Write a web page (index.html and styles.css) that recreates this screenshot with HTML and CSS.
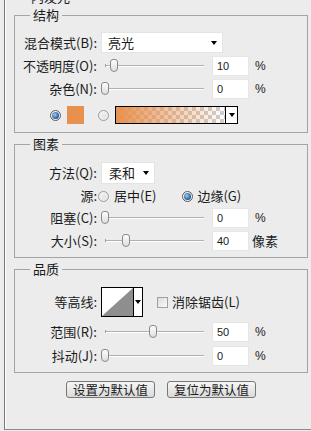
FILE: index.html
```html
<!DOCTYPE html>
<html lang="zh-CN">
<head>
    <meta charset="UTF-8">
    <title>内发光</title>
    <link rel="stylesheet" href="styles.css">
</head>
<body>
    <fieldset class="outer">
        <legend>内发光</legend>

        <fieldset class="group group-structure">
            <legend>结构</legend>
            <div class="row h21">
                <span class="lbl">混合模式(B):</span>
                <div class="select select-blend"><span>亮光</span><i class="caret"></i></div>
            </div>
            <div class="row h20 mt3">
                <span class="lbl">不透明度(O):</span>
                <div class="slider"><span class="thumb" style="left:13px"></span></div>
                <span class="num">10</span><span class="unit">%</span>
            </div>
            <div class="row h20 mt3">
                <span class="lbl">杂色(N):</span>
                <div class="slider"><span class="thumb" style="left:4px"></span></div>
                <span class="num">0</span><span class="unit">%</span>
            </div>
            <div class="row h18 mt7 fill-row">
                <span class="radio on"></span>
                <span class="swatch"></span>
                <span class="radio radio-grad"></span>
                <div class="grad">
                    <span class="grad-fill"></span>
                    <span class="grad-drop"><i class="caret"></i></span>
                </div>
            </div>
        </fieldset>

        <fieldset class="group group-elements">
            <legend>图素</legend>
            <div class="row h22">
                <span class="lbl">方法(Q):</span>
                <div class="select select-method"><span>柔和</span><i class="caret"></i></div>
            </div>
            <div class="row h20 mt2">
                <span class="lbl">源:</span>
                <span class="radio radio-src"></span>
                <span class="opt">居中(E)</span>
                <span class="radio on radio-edge"></span>
                <span class="opt">边缘(G)</span>
            </div>
            <div class="row h20 mt2">
                <span class="lbl">阻塞(C):</span>
                <div class="slider"><span class="thumb" style="left:4px"></span></div>
                <span class="num">0</span><span class="unit">%</span>
            </div>
            <div class="row h20 mt3">
                <span class="lbl">大小(S):</span>
                <div class="slider"><span class="thumb" style="left:25px"></span></div>
                <span class="num">40</span><span class="unit unit-cjk">像素</span>
            </div>
        </fieldset>

        <fieldset class="group group-quality">
            <legend>品质</legend>
            <div class="row h30">
                <span class="lbl">等高线:</span>
                <div class="contour">
                    <span class="contour-graph">
                        <svg width="31" height="28" viewBox="0 0 31 28">
                            <polygon points="0,28 31,0 31,28" fill="#8e8e8e"/>
                        </svg>
                    </span>
                    <span class="contour-drop"><i class="caret"></i></span>
                </div>
                <span class="check"></span>
                <span class="opt">消除锯齿(L)</span>
            </div>
            <div class="row h20 mt5">
                <span class="lbl">范围(R):</span>
                <div class="slider"><span class="thumb" style="left:52px"></span></div>
                <span class="num">50</span><span class="unit">%</span>
            </div>
            <div class="row h20 mt4">
                <span class="lbl">抖动(J):</span>
                <div class="slider"><span class="thumb" style="left:4px"></span></div>
                <span class="num">0</span><span class="unit">%</span>
            </div>
        </fieldset>

        <div class="buttons">
            <button class="btn">设置为默认值</button>
            <button class="btn">复位为默认值</button>
        </div>
    </fieldset>
</body>
</html>
```

FILE: styles.css
```css
html, body {
    margin: 0;
    height: 100%;
    overflow: hidden;
}
body {
    background-color: #ececec;
    color: #1a1a1a;
    font-family: "Noto Sans CJK SC", sans-serif;
    font-size: 13px;
    line-height: 14px;
}
fieldset {
    margin: 0;
    padding: 0;
    min-width: 0;
}
legend {
    font-size: 13px;
    line-height: 14px;
    padding: 0 3px;
}
.outer {
    margin: -10px 0 0 4px;
    width: 294px;
    padding: 4px 3px 31px 9px;
    border: 1px solid #8c8c8c;
    border-left-color: #777;
    box-shadow: inset 1px 0 0 #fff;
}
.outer > legend {
    margin-left: 14px;
}
.group {
    border: 1px solid #a4a4a4;
}
.group > legend {
    margin-left: 15px;
}
.group-structure {
    padding: 10px 0 8px;
}
.group-elements {
    margin-top: 4px;
    padding: 11px 0 6px;
}
.group-quality {
    margin-top: 4px;
    padding: 11px 0 6px;
}

.row {
    display: flex;
    align-items: center;
}
.h18 { height: 18px; }
.h20 { height: 20px; }
.h21 { height: 21px; }
.h22 { height: 22px; }
.h30 { height: 30px; }
.mt2 { margin-top: 2px; }
.mt3 { margin-top: 3px; }
.mt4 { margin-top: 4px; }
.mt5 { margin-top: 5px; }
.mt7 { margin-top: 7px; }

.lbl {
    flex: none;
    width: 82px;
    margin-right: 4px;
    text-align: right;
    white-space: nowrap;
}

.select {
    box-sizing: border-box;
    height: 100%;
    display: flex;
    align-items: center;
    justify-content: space-between;
    background-color: #fff;
    border: 1px solid #e4e4e4;
    padding: 0 5px 0 6px;
}
.select-blend {
    width: 122px;
}
.select-method {
    width: 54px;
    padding-left: 7px;
}
.caret {
    display: block;
    width: 0;
    height: 0;
    border-left: 3px solid transparent;
    border-right: 3px solid transparent;
    border-top: 4px solid #000;
}

.slider {
    position: relative;
    flex: none;
    width: 107px;
    height: 14px;
    margin-right: 4px;
}
.slider::before {
    content: "";
    position: absolute;
    left: 4px;
    right: 4px;
    top: 6px;
    height: 1px;
    background-color: #b0b0b0;
    border-bottom: 1px solid #fff;
}
.slider::after {
    content: "";
    position: absolute;
    left: 4px;
    top: 5px;
    width: 1px;
    height: 3px;
    background-color: #a0a0a0;
}
.thumb {
    position: absolute;
    top: 0;
    z-index: 1;
    box-sizing: border-box;
    width: 8px;
    height: 13px;
    margin-left: -4px;
    border: 1px solid #8a8a8a;
    border-radius: 3px 3px 4px 4px;
    background: linear-gradient(#fdfdfd, #dedede);
}

.num {
    box-sizing: border-box;
    flex: none;
    width: 37px;
    height: 20px;
    display: flex;
    align-items: center;
    padding-left: 4px;
    background-color: #fff;
    border: 1px solid #e6e6e6;
    font-family: "Liberation Sans", Arial, sans-serif;
    font-size: 11px;
}
.unit {
    margin-left: 6px;
    font-family: "Liberation Sans", Arial, sans-serif;
    font-size: 12px;
}
.unit-cjk {
    margin-left: 3px;
    font-family: "Noto Sans CJK SC", sans-serif;
    font-size: 13px;
}

.radio {
    position: relative;
    flex: none;
    box-sizing: border-box;
    width: 11px;
    height: 11px;
    border-radius: 50%;
    border: 1px solid #9a9a9a;
    background: radial-gradient(circle at 60% 60%, #e2e2e2, #fafafa);
}
.radio.on {
    border-color: #5a5a5a;
}
.radio.on::after {
    content: "";
    position: absolute;
    left: 1px;
    top: 1px;
    width: 7px;
    height: 7px;
    border-radius: 50%;
    background: radial-gradient(circle at 40% 40%, #9fd0f5, #1b5896 70%, #123c66);
}

.fill-row {
    padding-left: 35px;
}
.swatch {
    flex: none;
    width: 17px;
    height: 18px;
    margin-left: 6px;
    background-color: #e8914f;
}
.radio-grad {
    margin-left: 14px;
}
.grad {
    box-sizing: border-box;
    display: flex;
    width: 123px;
    height: 18px;
    margin-left: 6px;
    border: 1px solid #000;
}
.grad-fill {
    flex: 1;
    background:
        linear-gradient(to right, #e8914f 0%, rgba(232, 145, 79, 0.55) 45%, rgba(232, 145, 79, 0) 100%),
        conic-gradient(#cdcdcd 25%, #fff 0 50%, #cdcdcd 0 75%, #fff 0) 0 0 / 8px 8px;
}
.grad-drop {
    flex: none;
    width: 11px;
    display: flex;
    align-items: center;
    justify-content: center;
    background-color: #fff;
    border-left: 1px solid #000;
}

.radio-src {
    margin-left: -3px;
}
.radio-edge {
    margin-left: 26px;
}
.opt {
    margin-left: 5px;
    white-space: nowrap;
}
.radio-edge + .opt {
    margin-left: 4px;
}

.contour {
    box-sizing: border-box;
    flex: none;
    display: flex;
    width: 42px;
    height: 30px;
    border: 1px solid #000;
    background-color: #fff;
}
.contour-graph {
    flex: none;
    width: 31px;
    display: flex;
    align-items: flex-end;
}
.contour-graph svg {
    display: block;
}
.contour-drop {
    flex: 1;
    display: flex;
    align-items: center;
    justify-content: center;
    border-left: 1px solid #000;
}
.check {
    flex: none;
    box-sizing: border-box;
    width: 11px;
    height: 11px;
    margin-left: 14px;
    border: 1px solid #a0a0a0;
    background: linear-gradient(135deg, #dcdcdc, #fbfbfb);
}
.check + .opt {
    margin-left: 4px;
}

.buttons {
    display: flex;
    justify-content: center;
    gap: 12px;
    margin-top: 8px;
}
.btn {
    box-sizing: border-box;
    width: 89px;
    height: 17px;
    padding: 0;
    border: 1px solid #777;
    border-radius: 3px;
    background: linear-gradient(#f6f6f6, #dadada);
    color: #1a1a1a;
    font-family: "Noto Sans CJK SC", sans-serif;
    font-size: 12.5px;
    line-height: 15px;
}
```
